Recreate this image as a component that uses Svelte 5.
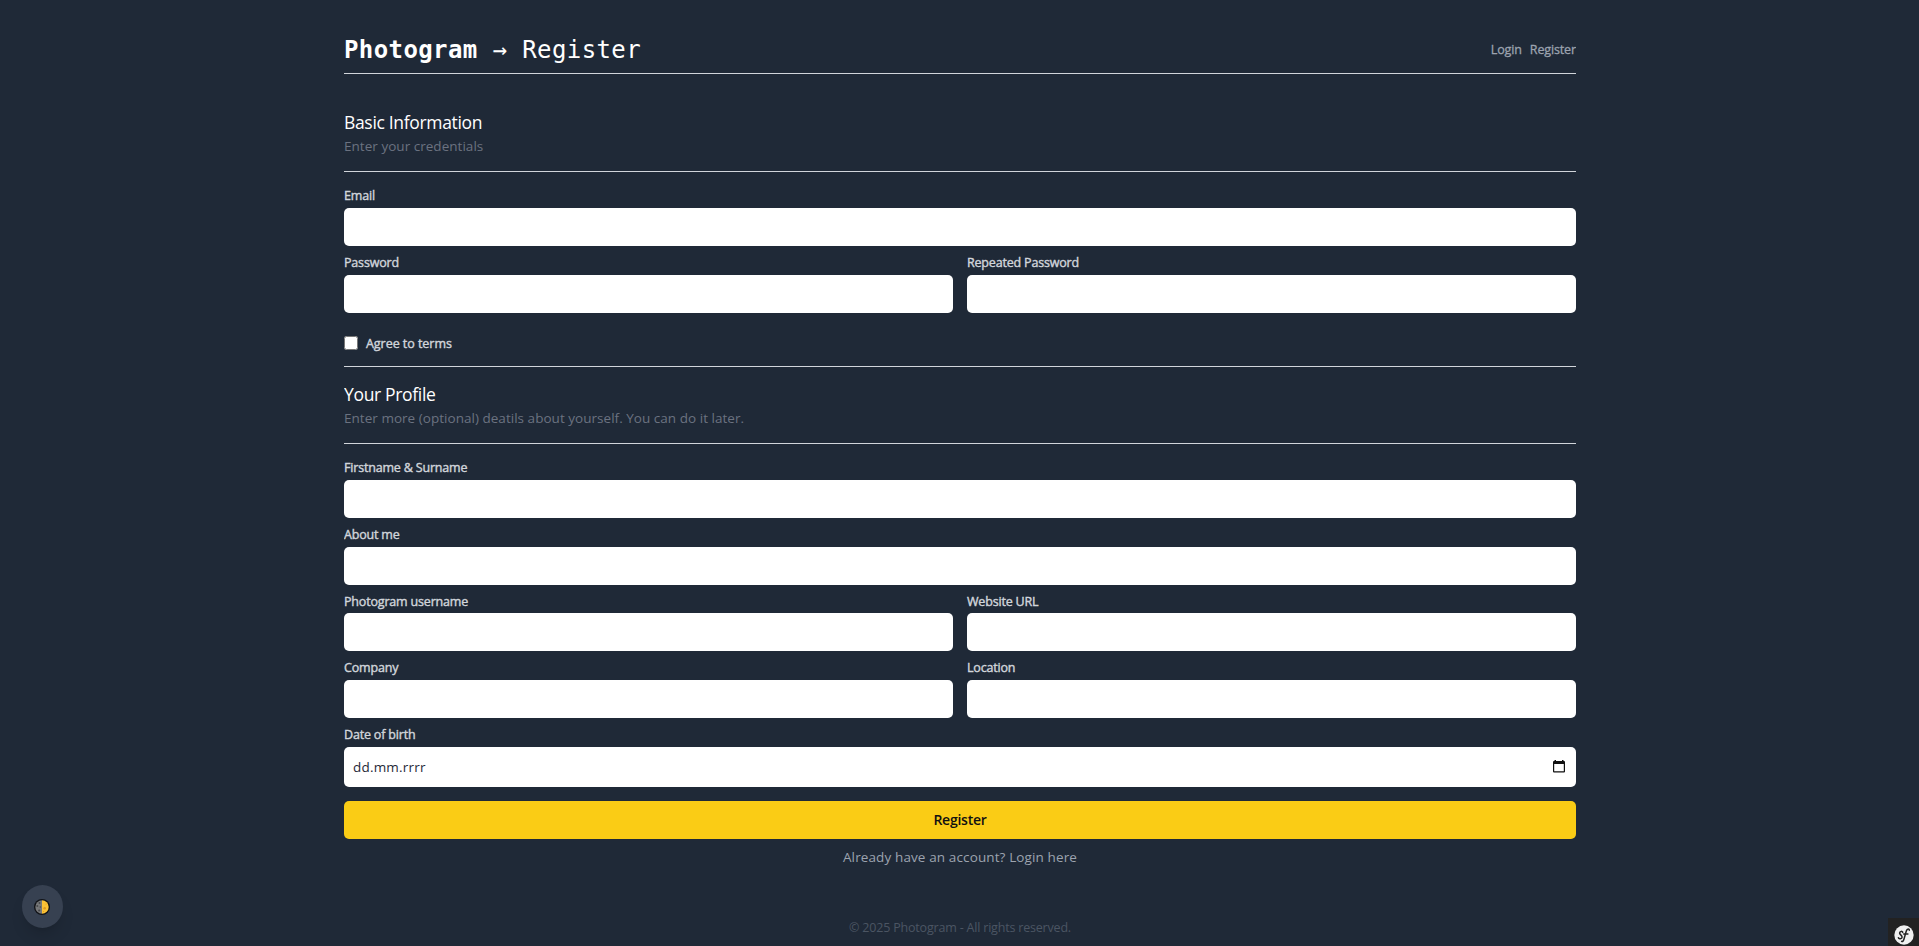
<script lang="ts">
  const profile = [
    { label: 'Firstname & Surname', wide: true },
    { label: 'About me', wide: true },
    { label: 'Photogram username' },
    { label: 'Website URL' },
    { label: 'Company' },
    { label: 'Location' },
  ];
</script>

<main class="page">
  <header class="top">
    <h1><b>Photogram</b> <span>→</span> <span>Register</span></h1>
    <nav><a href="#login">Login</a><a href="#register">Register</a></nav>
  </header>

  <form onsubmit={(e) => e.preventDefault()}>
    <section class="intro first">
      <h2>Basic Information</h2>
      <p>Enter your credentials</p>
    </section>
    <div class="fields">
      <label class="wide"><span class="name">Email</span><input type="email" /></label>
      <label><span class="name">Password</span><input type="password" /></label>
      <label><span class="name">Repeated Password</span><input type="password" /></label>
    </div>
    <label class="terms"><input type="checkbox" /><span>Agree to terms</span></label>

    <section class="intro second">
      <h2>Your Profile</h2>
      <p>Enter more (optional) deatils about yourself. You can do it later.</p>
    </section>
    <div class="fields">
      {#each profile as f}
        <label class:wide={f.wide}><span class="name">{f.label}</span><input type="text" /></label>
      {/each}
      <label class="wide">
        <span class="name">Date of birth</span>
        <div class="date">
          <span>dd.mm.rrrr</span>
          <svg width="12" height="13" viewBox="0 0 12 13"><path fill="#111" fill-rule="evenodd" d="M1.500 0H3v1h6V0h1.500v1H11a1 1 0 0 1 1 1v9.500a1 1 0 0 1-1 1H1a1 1 0 0 1-1-1V2a1 1 0 0 1 1-1h.5zM1.200 4v7.300h9.600V4z" /></svg>
        </div>
      </label>
    </div>
    <button class="submit">Register</button>
  </form>
  <a class="login" href="#login">Already have an account? Login here</a>
  <footer>© 2025 Photogram - All rights reserved.</footer>
</main>

<button class="theme" aria-label="Toggle theme">
  <svg width="16" height="16" viewBox="0 0 16 16">
    <circle cx="8" cy="8" r="8" fill="#111317" />
    <path d="M8 1.300a6.700 6.700 0 0 0 0 13.400z" fill="#777879" />
    <path d="M8 1.300a6.700 6.700 0 0 1 0 13.400z" fill="#fcc235" />
    <g fill="#47494b"><circle cx="5.500" cy="4" r="1" /><circle cx="3.300" cy="7" r="1" /><circle cx="6.300" cy="8" r=".8" /><circle cx="5.200" cy="11.500" r="1.100" /></g>
    <g fill="#e19a20"><circle cx="10.700" cy="9.300" r="1.300" /><circle cx="12" cy="5" r=".6" /><circle cx="9.600" cy="12.500" r=".6" /></g>
  </svg>
</button>

<div class="toolbar">
  <svg width="20" height="20" viewBox="0 0 20 20">
    <circle cx="10" cy="10" r="9.700" fill="#f0f0f0" />
    <path d="M8.700 7.400C8.600 5.900 5.700 6 5.600 8c-.1 1.800 2.600 2.100 2.500 4.200-.1 1.900-3.500 2.200-3.700.5M15.300 5.300c.1-1.700-2.100-1.900-3 .7l-2.300 8c-.6 2-1.400 2.900-2.400 2.400M9.700 9h4.200" fill="none" stroke="#222" stroke-width="1.500" stroke-linecap="round" />
  </svg>
</div>

<style>
  :global(body) { background: #1f2937; }
  .page { width: 1232px; margin: 0 0 0 344px; height: 946px; display: flex; flex-direction: column; box-sizing: border-box; padding-top: 28px; font-family: 'Open Sans', 'Noto Sans', sans-serif; color: #fff; overflow: hidden; }
  h1, h2, p { margin: 0; font-weight: 400; white-space: nowrap; }
  .top { height: 45px; border-bottom: 1px solid #d1d5db; display: flex; justify-content: space-between; align-items: flex-start; }
  h1 { font: 400 24px/45px 'DejaVu Sans Mono', monospace; letter-spacing: .4px; }
  nav { display: flex; gap: 8px; font-size: 12.500px; line-height: 43px; letter-spacing: -.13px; -webkit-text-stroke: .3px; }
  a { color: #9ca3af; text-decoration: none; }
  .intro { border-bottom: 1px solid #d1d5db; box-sizing: border-box; }
  .first { height: 98px; padding-top: 34px; }
  .second { height: 77px; padding-top: 13.200px; }
  h2 { font-size: 17.500px; line-height: 28px; letter-spacing: -.33px; }
  p { font-size: 13.500px; line-height: 20px; color: #6b7280; letter-spacing: .03px; }
  .fields { display: grid; grid-template-columns: 1fr 1fr; column-gap: 14px; padding-top: 7.100px; }
  .fields label { display: flex; flex-direction: column; font-size: 12.500px; line-height: 20px; color: #d1d5db; padding-top: 7.200px; }
  .name { height: 21.550px; letter-spacing: -.18px; -webkit-text-stroke: .4px; }
  .wide { grid-column: 1 / -1; }
  .fields input, .date { height: 38px; border: 0; border-radius: 5px; background: #fff; box-sizing: border-box; padding: 0 9px; margin: 0; }
  .date { height: 40px; padding-right: 11px; display: flex; align-items: center; justify-content: space-between; color: #1f2937; font-size: 13.500px; letter-spacing: .2px; }
  .terms { height: 53.400px; box-sizing: content-box; border-bottom: 1px solid #d1d5db; display: flex; gap: 8px; align-items: center; font-size: 12.500px; color: #d1d5db; letter-spacing: -.04px; -webkit-text-stroke: .4px; }
  .terms > * { position: relative; top: 4px; }
  .terms span { top: 4.600px; }
  .terms input { width: 14px; height: 14px; margin: 0; }
  .submit { margin: 14px 0 0; padding: 0; width: 100%; height: 38px; border: 0; border-radius: 5px; background: #facc15; color: #111; font: 600 14px 'Open Sans', sans-serif; letter-spacing: -.25px; display: block; }
  .login { align-self: center; margin-top: 8px; font-size: 13.500px; line-height: 20px; letter-spacing: .12px; }
  footer { align-self: center; margin-top: 51.300px; font-size: 12.500px; line-height: 20px; letter-spacing: -.19px; color: #4b5563; }
  .theme { position: fixed; left: 22px; top: 885px; width: 41px; height: 43px; border: 0; border-radius: 50%; background: #374151; padding: 0 1px 0 0; display: grid; place-items: center; box-shadow: 0 10px 15px -3px #0002, 0 4px 6px -4px #0002; }
  .toolbar { position: fixed; right: 0; bottom: 0; width: 31px; height: 28px; background: #222; display: flex; align-items: flex-end; justify-content: center; overflow: hidden; }
  .toolbar svg { margin-bottom: 1px; }
</style>
